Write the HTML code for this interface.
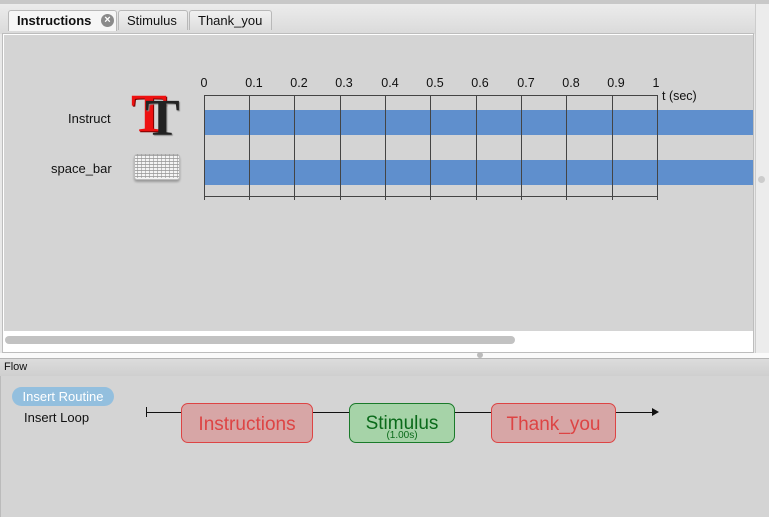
<!DOCTYPE html>
<html><head><meta charset="utf-8"><style>
body{margin:0;width:769px;height:517px;overflow:hidden;background:#e8e8e8;font-family:"Liberation Sans",sans-serif;position:relative}
.a{position:absolute}
.tab{position:absolute;top:10px;height:20px;border:1px solid #b8b8b8;border-bottom:none;background:linear-gradient(#f0f0f0,#dedede);font-size:13px;line-height:20px;color:#111;padding:0 8px;box-sizing:border-box;border-radius:3px 3px 0 0}
.lbl{position:absolute;font-size:13px;color:#111}
.tick{position:absolute;top:95px;width:1px;height:105px;background:#444}
.tn{position:absolute;top:76px;font-size:12.5px;color:#111;transform:translateX(-50%)}
.box{position:absolute;top:403px;height:40px;border-radius:7px;box-sizing:border-box;text-align:center;font-size:19px}
</style></head><body>
<div class="a" style="left:0;top:0;width:769px;height:4px;background:#c8c8c8"></div>
<div class="a" style="left:0;top:4px;width:755px;height:30px;background:linear-gradient(#ececec,#dadada)"></div>
<div class="tab" style="left:8px;width:109px;background:#f6f6f6;font-weight:bold;height:21px">Instructions<span class="a" style="left:92px;top:3px;width:13px;height:13px;border-radius:50%;background:#8a8a8a;color:#fff;font-size:11px;line-height:13px;text-align:center;font-weight:bold">×</span></div>
<div class="tab" style="left:118px;width:70px">Stimulus</div>
<div class="tab" style="left:189px;width:83px">Thank_you</div>
<div class="a" style="left:2px;top:33px;width:752px;height:320px;background:#fff;border:1px solid #bdbdbd;box-sizing:border-box"></div>
<div class="a" style="left:4px;top:35px;width:749px;height:296px;background:#d4d4d4"></div>
<div class="a" style="left:5px;top:336px;width:510px;height:8px;border-radius:4px;background:#c2c2c2"></div>
<div class="a" style="left:755px;top:4px;width:14px;height:350px;background:#ececec;border-left:1px solid #ccc"></div>
<div class="a" style="left:758px;top:176px;width:7px;height:7px;border-radius:50%;background:#ccc"></div>

<div class="lbl" style="left:68px;top:111px">Instruct</div>
<div class="lbl" style="left:51px;top:161px">space_bar</div>
<div class="a" style="left:131px;top:86px;font:bold 54px 'Liberation Serif',serif;color:#e11;text-shadow:1px 1px 0 #700;line-height:54px">T</div>
<div class="a" style="left:145px;top:93px;font:bold 52px 'Liberation Serif',serif;color:#222;text-shadow:1px 1px 1px #888;line-height:52px">T</div>
<div class="a" style="left:134px;top:154px;width:44px;height:24px;background:repeating-linear-gradient(0deg,#f4f4f4 0 2px,#aaa 2px 3px),#fff;border:1px solid #bbb;border-radius:3px;box-shadow:0 2px 2px #999"></div>
<div class="a" style="left:134px;top:154px;width:44px;height:24px;background:repeating-linear-gradient(90deg,transparent 0 3px,rgba(150,150,150,.6) 3px 4px)"></div>

<div class="a" style="left:204px;top:95px;width:453px;height:1px;background:#444"></div>
<div class="a" style="left:204px;top:196px;width:453px;height:1px;background:#444"></div>
<div class="a" style="left:204px;top:110px;width:549px;height:25px;background:#5f8fcd"></div>
<div class="a" style="left:204px;top:160px;width:549px;height:25px;background:#5f8fcd"></div>
<div class="tick" style="left:204px"></div><div class="tick" style="left:249px"></div><div class="tick" style="left:294px"></div><div class="tick" style="left:340px"></div><div class="tick" style="left:385px"></div><div class="tick" style="left:430px"></div><div class="tick" style="left:476px"></div><div class="tick" style="left:521px"></div><div class="tick" style="left:566px"></div><div class="tick" style="left:612px"></div><div class="tick" style="left:657px"></div>
<div class="tn" style="left:204px">0</div><div class="tn" style="left:254px">0.1</div><div class="tn" style="left:299px">0.2</div><div class="tn" style="left:344px">0.3</div><div class="tn" style="left:390px">0.4</div><div class="tn" style="left:435px">0.5</div><div class="tn" style="left:480px">0.6</div><div class="tn" style="left:526px">0.7</div><div class="tn" style="left:571px">0.8</div><div class="tn" style="left:616px">0.9</div><div class="tn" style="left:656px">1</div>
<div class="a" style="left:662px;top:89px;font-size:12.5px;color:#111">t (sec)</div>

<div class="a" style="left:0;top:353px;width:769px;height:5px;background:#fafafa"></div>
<div class="a" style="left:477px;top:352px;width:6px;height:6px;border-radius:50%;background:#bbb"></div>
<div class="a" style="left:0;top:358px;width:769px;height:18px;background:linear-gradient(#dcdcdc,#cfcfcf);border-top:1px solid #b5b5b5;box-sizing:border-box;font-size:11px;line-height:17px;padding-left:4px;color:#111">Flow</div>
<div class="a" style="left:0;top:376px;width:769px;height:141px;background:#d4d4d4;border-left:1px solid #bbb"></div>
<div class="a" style="left:12px;top:387px;width:102px;height:19px;border-radius:10px;background:#93bfde;color:#fff;font-size:13px;line-height:19px;text-align:center">Insert Routine</div>
<div class="a" style="left:24px;top:410px;font-size:13px;color:#111">Insert Loop</div>
<div class="a" style="left:146px;top:412px;width:508px;height:1px;background:#111"></div>
<div class="a" style="left:146px;top:407px;width:1px;height:10px;background:#111"></div>
<div class="a" style="left:652px;top:408px;width:0;height:0;border-left:7px solid #111;border-top:4px solid transparent;border-bottom:4px solid transparent"></div>
<div class="box" style="left:181px;width:132px;background:#d7a6a6;border:1px solid #d44;color:#d44;line-height:42px">Instructions</div>
<div class="box" style="left:349px;width:106px;background:#a6d3a8;border:1px solid #1a7a2a;color:#0a6a1a;line-height:40px">Stimulus<div style="position:absolute;left:0;right:0;top:27px;font-size:10px;line-height:10px">(1.00s)</div></div>
<div class="box" style="left:491px;width:125px;background:#d7a6a6;border:1px solid #d44;color:#d44;line-height:42px">Thank_you</div>
</body></html>
